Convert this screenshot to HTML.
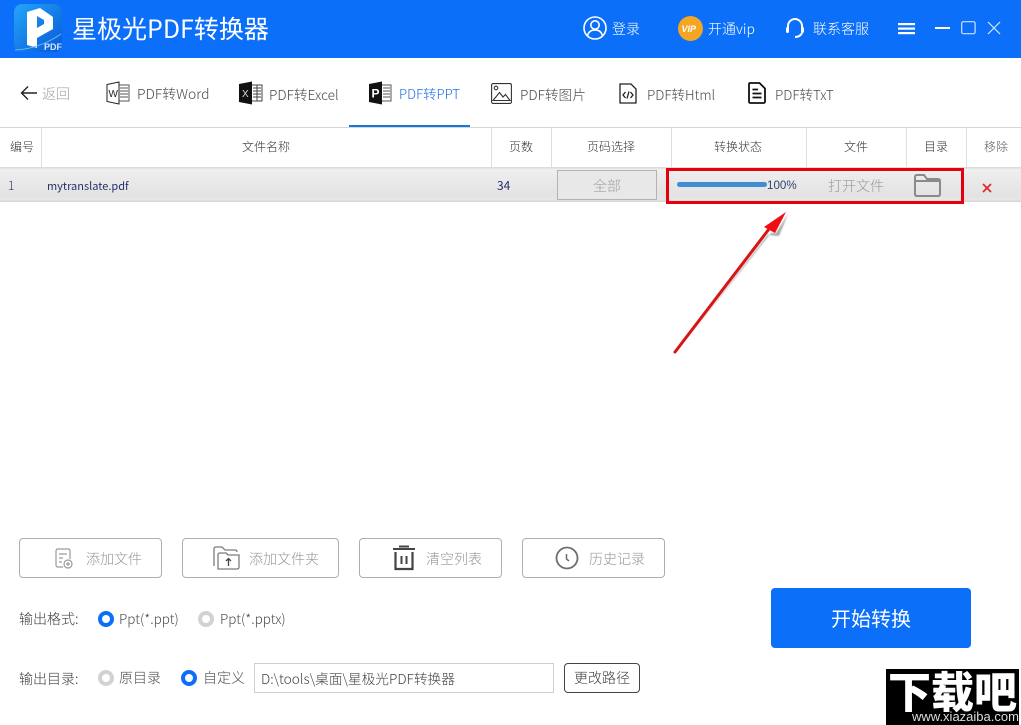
<!DOCTYPE html>
<html lang="zh"><head><meta charset="utf-8"><title>星极光PDF转换器</title>
<style>
html,body{margin:0;padding:0;background:#fff}
#p{position:relative;width:1021px;height:725px;overflow:hidden;background:#fff;font-family:"Noto Sans CJK SC","Liberation Sans",sans-serif;font-weight:300}
.t{position:absolute;white-space:nowrap;line-height:20px;height:20px;color:#4a4a4a}
.c{transform:translateX(-50%)}
.b{position:absolute;box-sizing:border-box;background:#fff}
svg{position:absolute;overflow:visible}
.btn{position:absolute;box-sizing:border-box;top:538px;height:40px;border:1px solid #aeaeae;border-radius:4px;background:#fff}
.v{position:absolute;top:127px;width:1px;height:41px;background:#dedede}
</style></head><body><div id="p">
<div class="b" style="left:0;top:0;width:1021px;height:58px;background:#0b6ff9"></div>

<svg style="left:14px;top:4px" width="48" height="48" viewBox="0 0 48 48">
<defs><linearGradient id="g" x1="0" y1="0" x2="1" y2="1"><stop offset="0" stop-color="#25a5f8"/><stop offset="1" stop-color="#0758d8"/></linearGradient></defs>
<rect width="48" height="48" rx="8" fill="url(#g)"/>
<path d="M13 8 L26 4 L39 13 V25 L23 34 V24 L30 20 V16 L23 12 V44 L13 41 Z" fill="#fff"/>
<path d="M1 46 Q25 45 47 30" stroke="#6bb6fb" fill="none"/>
<text x="30" y="46" font-size="9" font-weight="700" fill="#d5e8ff" font-family="Liberation Sans">PDF</text>
</svg>
<div class="t" style="left:72px;top:13px;font-size:25px;line-height:30px;height:30px;color:#fff;font-weight:400">星极光PDF转换器</div>

<svg style="left:583px;top:16px" width="24" height="24" viewBox="0 0 24 24" fill="none" stroke="#fff" stroke-width="1.6"><circle cx="12" cy="12" r="11"/><circle cx="12" cy="9" r="4.2"/><path d="M4.5 20 C5.5 15 9 14 12 14 C15 14 18.500 15 19.500 20"/></svg>
<div class="t" style="left:612px;top:19px;font-size:14px;color:#fff">登录</div>
<svg style="left:678px;top:16px" width="25" height="25" viewBox="0 0 25 25"><circle cx="12.500" cy="12.500" r="12.500" fill="#f4a522"/><text x="3.500" y="16" font-size="9" font-weight="700" font-style="italic" fill="#fff" font-family="Liberation Sans">VIP</text></svg>
<div class="t" style="left:708px;top:19px;font-size:14px;color:#fff">开通vip</div>
<svg style="left:785px;top:17px" width="20" height="22" viewBox="0 0 20 22" fill="none" stroke="#fff" stroke-width="2"><path d="M3 11 V9 A7 7 0 0 1 17 9 V11"/><rect x="1" y="10" width="3" height="6" rx="1.500" fill="#fff" stroke="none"/><rect x="16" y="10" width="3" height="6" rx="1.500" fill="#fff" stroke="none"/><path d="M17 16 Q15 20 10 20"/></svg>
<div class="t" style="left:813px;top:19px;font-size:14px;color:#fff">联系客服</div>
<svg style="left:898px;top:22px" width="18" height="13" fill="#fff"><rect width="17" height="2.200" y="1"/><rect width="17" height="2.200" y="5.500"/><rect width="17" height="2.200" y="10"/></svg>
<svg style="left:935px;top:20px" width="16" height="16"><rect y="7" width="15" height="2" fill="#fff"/></svg>
<svg style="left:961px;top:21px" width="15" height="14"><rect x=".7" y=".7" width="13.400" height="12" rx="1.500" fill="none" stroke="#cfe2ff" stroke-width="1.200"/></svg>
<svg style="left:987px;top:21px" width="14" height="14" stroke="#d8e8ff" stroke-width="1.200"><path d="M1 1 L13 13 M13 1 L1 13"/></svg>

<!-- nav -->
<svg style="left:20px;top:85px" width="17" height="16" fill="none" stroke="#222" stroke-width="1.400"><path d="M17 8 H1.500 M8 1.500 L1.500 8 L8 14.500"/></svg>
<div class="t" style="left:42px;top:84px;font-size:14px;color:#a0a0a0">返回</div>

<svg style="left:106px;top:81px" width="24" height="24" viewBox="0 0 24 24" fill="none" stroke="#222"><path d="M1 3.500 L13 1 V23 L1 20.500 Z" fill="#fff"/><path d="M13 4 H23 V20 H13 M14 7 H22 M14 10 H22 M14 13 H22 M14 16 H22" stroke="#555"/><text x="2.500" y="16" font-size="10" fill="#222" stroke="none" font-family="Liberation Sans">W</text></svg>
<div class="t" style="left:137px;top:84px;font-size:13.900px">PDF转Word</div>

<svg style="left:239px;top:81px" width="24" height="24" viewBox="0 0 24 24"><path d="M0 3 L13 0.500 V23.500 L0 21 Z" fill="#111"/><path d="M13 4 H23 V20 H13 M14 7 H22 M14 10 H22 M14 13 H22 M14 16 H22 M18 4 V20" stroke="#444" fill="none"/><text x="3" y="16" font-size="10" fill="#ddd" font-family="Liberation Sans">X</text></svg>
<div class="t" style="left:269px;top:84px;font-size:13.700px">PDF转Excel</div>

<svg style="left:369px;top:81px" width="23" height="24" viewBox="0 0 23 24"><path d="M0 3 L13 0.500 V23.500 L0 21 Z" fill="#111"/><path d="M13 4 H22 V20 H13 M14 7 H21 M14 10 H21 M14 13 H21 M14 16 H21" stroke="#555" fill="none"/><text x="2.500" y="16.500" font-size="12" font-weight="700" fill="#fff" font-family="Liberation Sans">P</text></svg>
<div class="t" style="left:399px;top:84px;font-size:13.300px;color:#1b6fe0">PDF转PPT</div>
<div class="b" style="left:349px;top:125px;width:121px;height:3px;background:#1479d9"></div>

<svg style="left:491px;top:83px" width="21" height="21" viewBox="0 0 21 21" fill="none" stroke="#333" stroke-width="1.100"><rect x=".6" y=".6" width="19.800" height="19.800" rx="1.500"/><circle cx="5" cy="5" r="1.800"/><path d="M2 17.500 L8.500 9.500 L12 14 L14.500 11.500 L19 17.500 Z"/></svg>
<div class="t" style="left:520px;top:84px;font-size:13.700px">PDF转图片</div>

<svg style="left:619px;top:83px" width="18" height="21" viewBox="0 0 18 21" fill="none" stroke="#222" stroke-width="1.300"><path d="M1 1 H12 L17 6 V20 H1 Z"/><path d="M6.500 9 L4 12 L6.500 15 M11.500 9 L14 12 L11.500 15 M10 8.500 L8 15.500"/></svg>
<div class="t" style="left:647px;top:84px;font-size:13.500px">PDF转Html</div>

<svg style="left:748px;top:82px" width="18" height="22" viewBox="0 0 18 22" fill="none" stroke="#111" stroke-width="1.800"><path d="M2 1 H11.500 L17 6.500 V19.500 Q17 21 15.500 21 H2.500 Q1 21 1 19.500 V2 Q1 1 2 1 Z"/><path d="M4.500 7.500 H10 M4.500 11.500 H13.500 M4.500 15.500 H13.500"/></svg>
<div class="t" style="left:775px;top:84px;font-size:13.500px">PDF转TxT</div>

<!-- table -->
<div class="b" style="left:0;top:127px;width:1021px;height:1px;background:#d6d6d6"></div>
<div class="v" style="left:41px"></div><div class="v" style="left:491px"></div><div class="v" style="left:551px"></div><div class="v" style="left:671px"></div><div class="v" style="left:806px"></div><div class="v" style="left:906px"></div><div class="v" style="left:966px"></div>
<div class="t" style="left:10px;top:137px;font-size:12px;color:#333">编号</div>
<div class="t c" style="left:266px;top:137px;font-size:12px;color:#333">文件名称</div>
<div class="t c" style="left:521px;top:137px;font-size:12px;color:#333">页数</div>
<div class="t c" style="left:611px;top:137px;font-size:12px;color:#333">页码选择</div>
<div class="t c" style="left:738px;top:137px;font-size:12px;color:#333">转换状态</div>
<div class="t c" style="left:856px;top:137px;font-size:12px;color:#333">文件</div>
<div class="t c" style="left:936px;top:137px;font-size:12px;color:#333">目录</div>
<div class="t c" style="left:996px;top:137px;font-size:12px;color:#555">移除</div>
<div class="b" style="left:0;top:167px;width:1021px;height:35px;background:linear-gradient(#d8d8d8 0,#f1f1f1 3px,#ececec 8px,#e3e3e3 28px,#e6e6e6 33px,#d6d6d6 34px)"></div>
<div class="t" style="left:8px;top:176px;font-size:12px;color:#2c3c70">1</div>
<div class="t" style="left:47px;top:176px;font-size:11px;color:#25306a;font-weight:400">mytranslate.pdf</div>
<div class="t" style="left:497px;top:176px;font-size:12px;color:#25306a;font-weight:400">34</div>
<div class="b" style="left:557px;top:170px;width:100px;height:30px;background:#e8e8e8;border:1px solid #b3b3b3"></div>
<div class="t c" style="left:607px;top:176px;font-size:14px;color:#a0a0a0">全部</div>
<div class="b" style="left:677px;top:182px;width:90px;height:5px;border-radius:3px;background:#3f8ed2"></div>
<div class="t" style="left:767px;top:176px;font-size:11.600px;color:#33446e;font-family:'Liberation Sans',sans-serif">100%</div>
<div class="t c" style="left:856px;top:176px;font-size:14px;color:#999">打开文件</div>
<svg style="left:914px;top:174px" width="27" height="23" viewBox="0 0 27 23" fill="none" stroke="#8a8a8a" stroke-width="2"><path d="M1 20 V3 Q1 1 3 1 H10 L13 5 H24 Q26 5 26 7 V20 Q26 22 24 22 H3 Q1 22 1 20 Z M1 7 H26"/></svg>
<svg style="left:982px;top:183px" width="10" height="10" stroke="#e02a2a" stroke-width="1.800"><path d="M1 1 L9 9 M9 1 L1 9"/></svg>
<div class="b" style="left:666px;top:168px;width:298px;height:36px;border:3px solid #e3000f;background:transparent"></div>

<!-- arrow -->
<svg style="left:0;top:0" width="1021" height="725">
<defs><filter id="s" x="-20%" y="-20%" width="140%" height="140%"><feGaussianBlur stdDeviation=".8"/></filter></defs>
<path d="M675 354 L769 233 L768 235 L779 236 L788 214 L776 233 L771 233 Z" fill="#555" opacity=".5" filter="url(#s)"/>
<path d="M675 352 L769 229" stroke="#d81414" stroke-width="3" fill="none" stroke-linecap="round"/>
<path d="M786 212 L764 227 L775 233 Z" fill="#f20d12"/>
</svg>

<!-- buttons -->
<div class="btn" style="left:19px;width:143px"></div>
<div class="btn" style="left:182px;width:157px"></div>
<div class="btn" style="left:359px;width:143px"></div>
<div class="btn" style="left:522px;width:143px"></div>
<svg style="left:55px;top:548px" width="19" height="21" viewBox="0 0 19 21" fill="none" stroke="#9a9a9a" stroke-width="1.200"><path d="M8 19 H3 Q1 19 1 17 V3 Q1 1 3 1 H13 Q15 1 15 3 V11"/><path d="M4 6 H12 M4 10 H8 M4 14 H7"/><circle cx="13" cy="16" r="4"/><path d="M11 16 H15 M13 14 V18"/></svg>
<div class="t" style="left:86px;top:549px;font-size:14px;color:#969696">添加文件</div>
<svg style="left:213px;top:546px" width="27" height="24" viewBox="0 0 27 24" fill="none" stroke="#7c7c7c" stroke-width="1.300"><path d="M1 20 V3 Q1 1 3 1 H9 L12 4 H22 Q24 4 24 6"/><path d="M5 23 V9 Q5 7 7 7 H13 L15 9 H26 V21 Q26 23 24 23 Z"/><path d="M15.500 20 V13 M13 15 L15.500 12.500 L18 15" stroke="#444"/></svg>
<div class="t" style="left:249px;top:549px;font-size:14px;color:#969696">添加文件夹</div>
<svg style="left:392px;top:545px" width="24" height="26" viewBox="0 0 24 26" fill="none" stroke="#444" stroke-width="2"><path d="M1 4 H23 M7 1.500 H17"/><path d="M3.500 7 V24 H20.500 V7" stroke-width="2.200"/><path d="M9.500 11 V19 M14.500 11 V19"/></svg>
<div class="t" style="left:426px;top:549px;font-size:14px;color:#969696">清空列表</div>
<svg style="left:555px;top:546px" width="24" height="24" viewBox="0 0 24 24" fill="none" stroke="#6e6e6e" stroke-width="1.800"><circle cx="12" cy="12" r="10.500"/><path d="M11.500 8 V13 L14 15" stroke-width="1.500"/></svg>
<div class="t" style="left:589px;top:549px;font-size:14px;color:#969696">历史记录</div>

<!-- options -->
<div class="t" style="left:19px;top:609px;font-size:14px;color:#3c3c3c">输出格式:</div>
<div class="b" style="left:98px;top:611px;width:16px;height:16px;border-radius:50%;border:4px solid #0b6ff9"></div>
<div class="t" style="left:119px;top:608px;font-size:13.500px;color:#4a4a4a">Ppt(*.ppt)</div>
<div class="b" style="left:198px;top:611px;width:16px;height:16px;border-radius:50%;border:4px solid #d2d2d2"></div>
<div class="t" style="left:220px;top:608px;font-size:13.500px;color:#4a4a4a">Ppt(*.pptx)</div>
<div class="t" style="left:19px;top:669px;font-size:14px;color:#3c3c3c">输出目录:</div>
<div class="b" style="left:98px;top:670px;width:16px;height:16px;border-radius:50%;border:4px solid #d2d2d2"></div>
<div class="t" style="left:119px;top:668px;font-size:14px;color:#4a4a4a">原目录</div>
<div class="b" style="left:181px;top:670px;width:16px;height:16px;border-radius:50%;border:4px solid #0b6ff9"></div>
<div class="t" style="left:203px;top:668px;font-size:14px;color:#4a4a4a">自定义</div>
<div class="b" style="left:254px;top:663px;width:300px;height:30px;border:1px solid #cfcfcf"></div>
<div class="t" style="left:261px;top:668px;font-size:13.700px;color:#444">D:\tools\桌面\星极光PDF转换器</div>
<div class="b" style="left:564px;top:663px;width:76px;height:30px;border:1px solid #444;border-radius:4px"></div>
<div class="t c" style="left:602px;top:668px;font-size:14px;color:#3c3c3c">更改路径</div>

<div class="b" style="left:771px;top:588px;width:200px;height:60px;background:#0b6ff9;border-radius:4px"></div>
<div class="t c" style="left:871px;top:606px;font-size:20px;line-height:24px;height:24px;color:#fff;font-weight:400">开始转换</div>

<!-- watermark -->
<div class="b" style="left:886px;top:669px;width:133px;height:56px;background:#000"></div>
<div class="t" style="left:888px;top:665px;width:130px;font-size:43px;line-height:50px;height:50px;color:#fff;font-weight:900;letter-spacing:0">下载吧</div>
<div class="b" style="left:908px;top:712px;width:111px;height:13px;background:#000"></div>
<div class="t" style="left:912px;top:709px;font-size:13px;line-height:16px;height:16px;color:#ddd;font-family:'Liberation Sans',sans-serif">www.xiazaiba.com</div>
</div></body></html>
